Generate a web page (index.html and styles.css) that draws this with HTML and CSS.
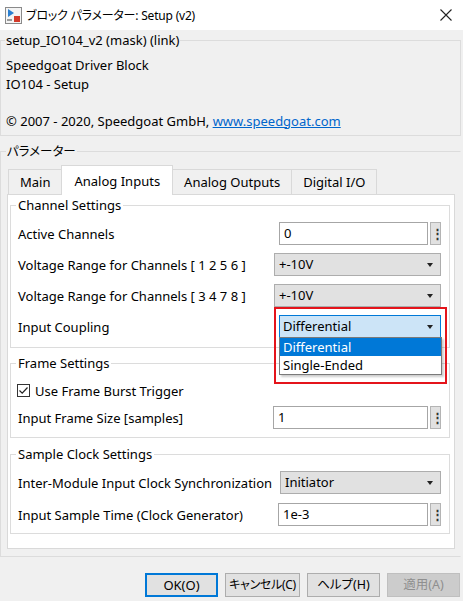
FILE: index.html
```html
<!DOCTYPE html>
<html>
<head>
<meta charset="utf-8">
<link rel="stylesheet" href="styles.css">
</head>
<body>
<div class="titlebar">
  <svg class="appicon" width="17" height="17" viewBox="0 0 17 17">
    <rect x="0.5" y="0.5" width="16" height="16" fill="#f4f4f4" stroke="#8a8a8a"/>
    <path d="M3 2 L3 10 L9 6 Z" fill="#2a7fd0"/>
    <rect x="9" y="9" width="6" height="6" fill="#d23a2a"/>
    <rect x="2" y="12" width="5" height="2" fill="#9a9a9a"/>
  </svg>
  <span class="title">ブロック パラメーター: Setup (v2)</span>
  <svg class="close" width="12" height="12" viewBox="0 0 12 12">
    <path d="M0.5 0.5 L11.5 11.5 M11.5 0.5 L0.5 11.5" stroke="#222" stroke-width="1.1"/>
  </svg>
</div>

<fieldset class="group mask">
  <legend>setup_IO104_v2 (mask) (link)</legend>
  <div class="line">Speedgoat Driver Block</div>
  <div class="line">IO104 - Setup</div>
  <div class="line blank"></div>
  <div class="line">© 2007 - 2020, Speedgoat GmbH, <a class="link">www.speedgoat.com</a></div>
</fieldset>

<fieldset class="group params">
  <legend class="jp">パラメーター</legend>
  <div class="tabs">
    <div class="tab first">Main</div>
    <div class="tab active">Analog Inputs</div>
    <div class="tab">Analog Outputs</div>
    <div class="tab">Digital I/O</div>
  </div>
  <div class="panel">
    <fieldset class="sub channel">
      <legend>Channel Settings</legend>
      <div class="row r31">
        <span>Active Channels</span>
        <div class="editwrap">
          <div class="edit w149">0</div>
          <div class="more">⋮</div>
        </div>
      </div>
      <div class="row r31">
        <span>Voltage Range for Channels [ 1 2 5 6 ]</span>
        <div class="combo w167">+-10V<span class="arrow"></span></div>
      </div>
      <div class="row r31">
        <span>Voltage Range for Channels [ 3 4 7 8 ]</span>
        <div class="combo w167">+-10V<span class="arrow"></span></div>
      </div>
      <div class="row r31">
        <span>Input Coupling</span>
        <div class="combo focus w162">Differential<span class="arrow"></span>
          <div class="droplist">
            <div class="opt sel">Differential</div>
            <div class="opt">Single-Ended</div>
          </div>
          <div class="redbox"></div>
        </div>
      </div>
    </fieldset>

    <fieldset class="sub frame">
      <legend>Frame Settings</legend>
      <div class="row r27">
        <label class="check"><span class="box"><svg width="11" height="11" viewBox="0 0 11 11"><path d="M1.5 5.5 L4.2 8.2 L9.5 2.5" fill="none" stroke="#222" stroke-width="1.2"/></svg></span>Use Frame Burst Trigger</label>
      </div>
      <div class="row r27">
        <span>Input Frame Size [samples]</span>
        <div class="editwrap">
          <div class="edit w155">1</div>
          <div class="more">⋮</div>
        </div>
      </div>
    </fieldset>

    <fieldset class="sub clock">
      <legend>Sample Clock Settings</legend>
      <div class="row r32">
        <span>Inter-Module Input Clock Synchronization</span>
        <div class="combo w161">Initiator<span class="arrow"></span></div>
      </div>
      <div class="row r32">
        <span>Input Sample Time (Clock Generator)</span>
        <div class="editwrap">
          <div class="edit w150">1e-3</div>
          <div class="more">⋮</div>
        </div>
      </div>
    </fieldset>
  </div>
</fieldset>

<div class="buttons">
  <div class="btn default">OK(O)</div>
  <div class="btn wide jp">キャンセル(C)</div>
  <div class="btn jp">ヘルプ(H)</div>
  <div class="btn disabled jp">適用(A)</div>
</div>
</body>
</html>
```

FILE: styles.css
```css
* { box-sizing: border-box; }
html, body { margin: 0; padding: 0; }
body {
  width: 463px;
  height: 601px;
  overflow: hidden;
  background: #f0f0f0;
  font-family: "Noto Sans", "Noto Sans CJK JP", sans-serif;
  font-size: 13px;
  color: #000;
}
.jp {
  font-feature-settings: "palt";
}

.titlebar {
  height: 30px;
  background: #fff;
  display: flex;
  align-items: center;
  padding-left: 5px;
  padding-right: 11px;
}
.appicon { flex: none; margin-top: 1px; }
.title {
  margin-left: 4px;
  font-size: 12px;
  flex: 1;
  font-feature-settings: "palt";
  letter-spacing: -0.2px;
}
.close { flex: none; }

.group {
  border: 1px solid #dcdcdc;
  margin: 0 2px 0 0;
  padding: 0;
  min-width: 0;
}
.group > legend {
  line-height: 19px;
  padding: 0 1px;
  margin-left: -1px;
}

.mask {
  margin-top: 1px;
  padding: 6px 5px 5px 5px;
}
.mask .line { line-height: 18.5px; height: 18.5px; }
.link { color: #0066cc; text-decoration: underline; }

.params {
  margin-top: 6px;
  padding: 2px 5px 7px 6px;
  border-right-color: transparent;
}
.params > legend { font-size: 12.5px; }

.tabs {
  display: flex;
  align-items: flex-end;
  height: 31px;
  padding-left: 1px;
  position: relative;
  z-index: 1;
}
.tab {
  height: 25px;
  line-height: 24px;
  padding: 0 11px;
  background: #f0f0f0;
  border: 1px solid #d9d9d9;
  border-bottom: none;
  margin-left: -1px;
}
.tab.first { margin-left: 0; padding: 0 11px 0 11px; }
.tab.active {
  line-height: 30px;
  background: #fff;
  padding: 0 12px 0 12px;
  margin-bottom: -1px;
  height: 30px;
}

.panel {
  background: #fff;
  border: 1px solid #d9d9d9;
  padding: 1px 4px 14px 2px;
  height: 355px;
}

.sub {
  border: 1px solid #dcdcdc;
  margin: 0;
  padding: 0 8px 0 7px;
  min-width: 0;
}
.sub > legend {
  line-height: 19px;
  padding: 0 2px;
  margin-left: -2px;
}
.channel { padding-top: 3px; padding-bottom: 5px; }
.frame { margin-top: 6px; padding-top: 4px; padding-bottom: 6px; }
.clock { margin-top: 7px; padding-top: 2.5px; padding-bottom: 2px; }

.row {
  display: flex;
  align-items: center;
  justify-content: space-between;
}
.r31 { height: 31px; }
.r27 { height: 27px; }
.r32 { height: 32px; }

.editwrap { display: flex; gap: 2px; align-items: center; }
.edit {
  height: 23px;
  line-height: 21px;
  border: 1px solid #a6a6a6;
  background: #fff;
  padding-left: 4px;
}
.more {
  width: 11px;
  height: 23px;
  line-height: 21px;
  text-align: center;
  background: #e1e1e1;
  border: 1px solid #b4b4b4;
  font-size: 13px;
  font-weight: bold;
  color: #333;
}
.w149 { width: 149px; }
.w155 { width: 155px; }
.w150 { width: 150px; }
.w167 { width: 167px; }
.w162 { width: 162px; }
.w161 { width: 161px; }

.combo {
  position: relative;
  height: 23px;
  line-height: 21px;
  background: #e1e1e1;
  border: 1px solid #adadad;
  padding-left: 4px;
}
.combo.focus {
  background: #cce4f7;
  border-color: #0078d7;
  padding-left: 3px;
}
.arrow {
  position: absolute;
  right: 7px;
  top: 9px;
  width: 0;
  height: 0;
  border-left: 3.5px solid transparent;
  border-right: 3.5px solid transparent;
  border-top: 4px solid #222;
}

.droplist {
  position: absolute;
  left: -1px;
  top: 21px;
  width: 163px;
  background: #fff;
  border: 1px solid #7a7a7a;
  box-shadow: 2px 2px 2px rgba(0,0,0,0.2);
  z-index: 5;
}
.opt {
  height: 18px;
  line-height: 18px;
  padding-left: 3px;
}
.opt.sel { background: #0078d7; color: #fff; }

.redbox {
  position: absolute;
  left: -6px;
  top: -9px;
  width: 173px;
  height: 77px;
  border: 2px solid #e4141b;
  z-index: 6;
  pointer-events: none;
}

.check { display: flex; align-items: center; margin-left: -1px; }
.box {
  width: 13px;
  height: 13px;
  border: 1px solid #333;
  background: #fff;
  display: flex;
  align-items: center;
  justify-content: center;
  margin-right: 5px;
}

.buttons {
  display: flex;
  justify-content: flex-end;
  gap: 7px;
  margin-top: 16px;
  padding-right: 3px;
}
.btn {
  width: 73px;
  height: 24px;
  line-height: 22px;
  text-align: center;
  background: #e1e1e1;
  border: 1px solid #adadad;
  font-size: 12.5px;
  white-space: nowrap;
}
.btn.wide { width: 75px; font-size: 12px; letter-spacing: -0.3px; }
.btn.default { border: 1px solid #0078d7; box-shadow: inset 0 0 0 1px #0078d7; font-size: 13px; }
.btn.disabled { background: #cccccc; border-color: #bfbfbf; color: #8f8f8f; }
```
